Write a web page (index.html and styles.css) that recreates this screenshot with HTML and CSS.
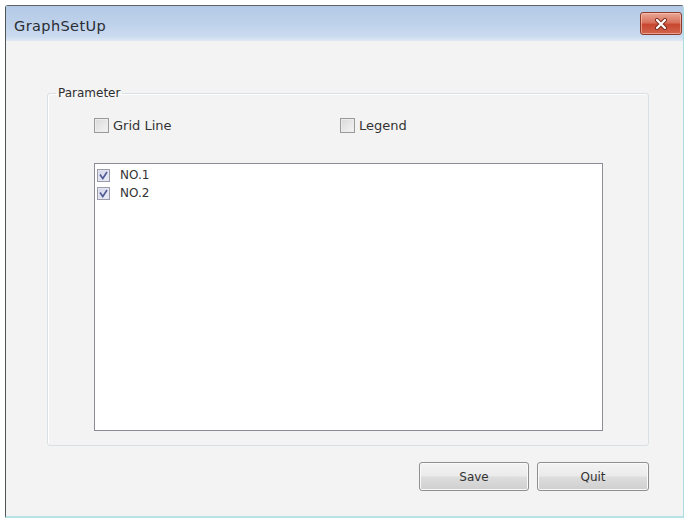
FILE: index.html
```html
<!DOCTYPE html>
<html lang="en">
<head>
<meta charset="utf-8">
<title>GraphSetUp</title>
<link rel="stylesheet" href="styles.css">
</head>
<body>
<div class="window">
  <div class="titlebar">
    <span class="title">GraphSetUp</span>
    <button class="close" type="button" aria-label="Close">
      <svg width="14" height="12" viewBox="0 0 14 12">
        <path d="M3 2 L11 10 M11 2 L3 10" stroke="#7a2a1c" stroke-width="4" stroke-linecap="round"/>
        <path d="M3 2 L11 10 M11 2 L3 10" stroke="#ffffff" stroke-width="2.2" stroke-linecap="round"/>
      </svg>
    </button>
  </div>
  <div class="client">
    <fieldset class="group">
      <legend>Parameter</legend>
      <div class="group-body">
        <div class="options">
          <label class="check"><span class="box"></span>Grid Line</label>
          <label class="check"><span class="box"></span>Legend</label>
        </div>
        <ul class="list">
          <li class="item">
            <span class="box small checked">
              <svg width="9" height="9" viewBox="0 0 9 9"><path d="M1 3.5 L3.8 7.5 L8 1" fill="none" stroke="#4d5a96" stroke-width="1.6"/></svg>
            </span>NO.1
          </li>
          <li class="item">
            <span class="box small checked">
              <svg width="9" height="9" viewBox="0 0 9 9"><path d="M1 3.5 L3.8 7.5 L8 1" fill="none" stroke="#4d5a96" stroke-width="1.6"/></svg>
            </span>NO.2
          </li>
        </ul>
      </div>
    </fieldset>
    <div class="actions">
      <button class="btn save" type="button">Save</button>
      <button class="btn quit" type="button">Quit</button>
    </div>
  </div>
</div>
</body>
</html>
```
FILE: styles.css
```css
html, body {
  margin: 0;
  background: #ffffff;
}

body {
  padding: 5px 3px 0 5px;
  font-family: "DejaVu Sans", "Liberation Sans", sans-serif;
  color: #262626;
}

.window {
  box-sizing: border-box;
  width: 679px;
  height: 513px;
  display: flex;
  flex-direction: column;
  border-top: 1px solid #5e6468;
  border-left: 1px solid #4f5457;
  border-right: 1px solid #a9dde0;
  border-bottom: 2px solid #b5e3e6;
  border-radius: 3px 3px 0 0;
  background: #f3f3f3;
}

/* caption strip */
.titlebar {
  height: 34px;
  display: flex;
  align-items: flex-start;
  justify-content: space-between;
  padding: 0 1px 0 8px;
  background: linear-gradient(#b3c9e6, #bfd2eb 55%, #cbdbf0 90%, #dae6f4);
  border-bottom: 1px solid #dfe8f2;
}

.title {
  font-size: 14.5px;
  line-height: 14px;
  margin-top: 13px;
  color: #2a2d33;
  letter-spacing: 0.4px;
}

.close {
  box-sizing: border-box;
  width: 42px;
  height: 23px;
  margin-top: 6px;
  padding: 0;
  border: 1px solid #8c3a2c;
  border-radius: 3px;
  background: linear-gradient(#eaa795, #d9735e 45%, #c8462f 55%, #d2664e);
  box-shadow: inset 0 0 0 1px rgba(255, 210, 195, 0.55);
  display: flex;
  align-items: center;
  justify-content: center;
}

.client {
  flex: 1;
  padding: 45px 34px 0 41px;
  display: flex;
  flex-direction: column;
}

/* "Parameter" group box */
.group {
  margin: 0;
  padding: 0;
  min-width: 0;
  width: 602px;
  box-sizing: border-box;
  border: 1px solid #d8e0e4;
  border-radius: 3px;
  box-shadow: inset 1px 1px 0 #ffffff;
}

.group legend {
  margin-left: 8px;
  padding: 0 2px;
  font-size: 12px;
  line-height: 14px;
  color: #2e2e2e;
}

.group-body {
  padding: 0 45px 14px 46px;
}

.options {
  display: grid;
  grid-template-columns: 246px auto;
  margin-top: 18px;
}

.check {
  display: flex;
  align-items: center;
  font-size: 13px;
  line-height: 15px;
  color: #333333;
}

.box {
  box-sizing: border-box;
  width: 15px;
  height: 15px;
  margin-right: 4px;
  border: 1px solid #9a9a9a;
  background: linear-gradient(135deg, #d9d9d9, #f4f4f4);
  box-shadow: inset 0 0 0 1px #ececec;
  display: flex;
  align-items: center;
  justify-content: center;
}

.box.small {
  width: 13px;
  height: 13px;
  margin-right: 10px;
  border-color: #9a9cab;
  background: linear-gradient(135deg, #d3d4e6, #eceef8);
  box-shadow: inset 0 0 0 1px #e4e5f0;
}

/* checked list box */
.list {
  list-style: none;
  margin: 30px 0 0;
  padding: 2px 2px;
  height: 268px;
  box-sizing: border-box;
  background: #ffffff;
  border: 1px solid #8a8d94;
}

.item {
  display: flex;
  align-items: center;
  height: 18px;
  font-size: 12px;
  color: #333333;
}

.actions {
  display: flex;
  justify-content: flex-end;
  gap: 8px;
  margin-top: 16px;
}

.btn {
  box-sizing: border-box;
  height: 29px;
  width: 110px;
  padding: 0;
  font-family: "DejaVu Sans", "Liberation Sans", sans-serif;
  font-size: 12px;
  color: #333333;
  border: 1px solid #8f8f8f;
  border-radius: 3px;
  background: linear-gradient(#f3f3f3, #ebebeb 48%, #dddddd 52%, #cfcfcf);
  box-shadow: inset 0 0 0 1px #fafafa;
}

.btn.quit {
  width: 112px;
}
```
